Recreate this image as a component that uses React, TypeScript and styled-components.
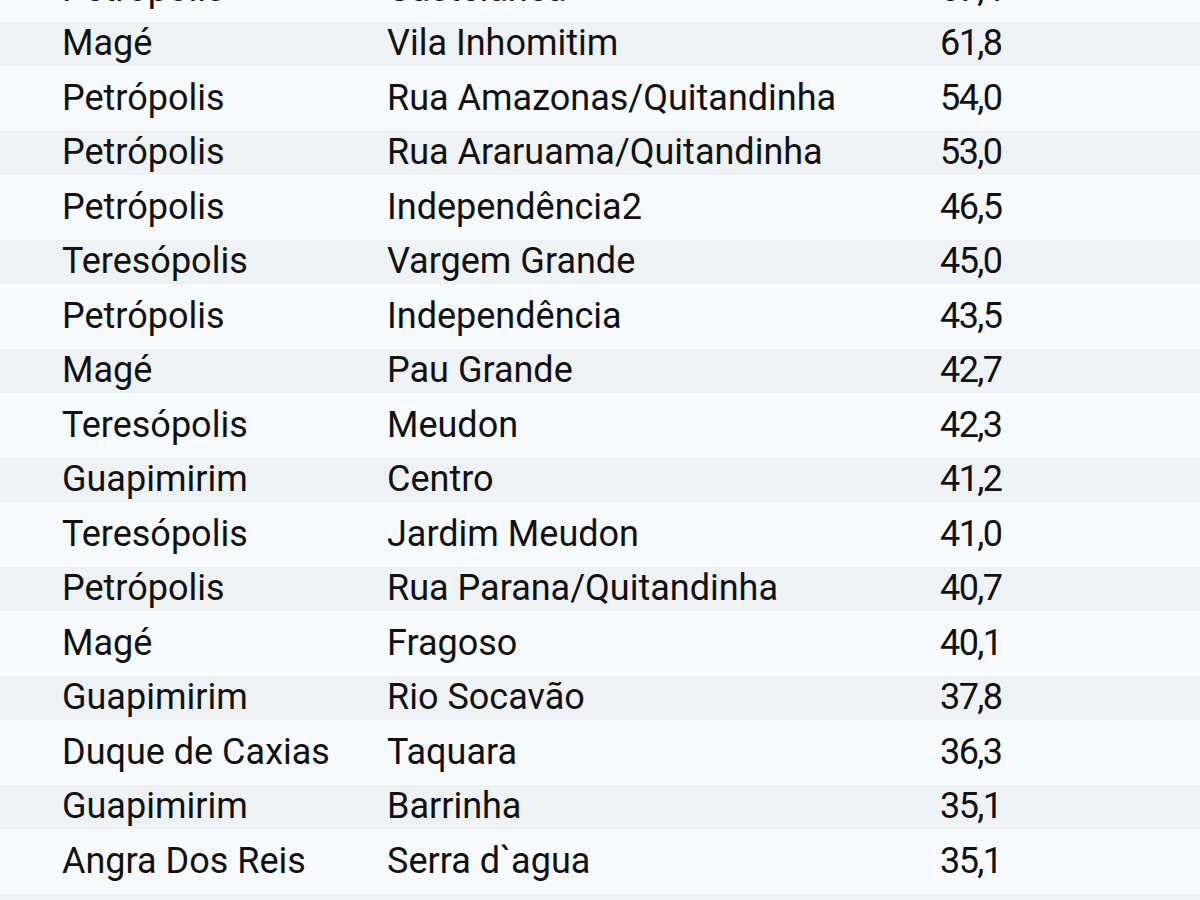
import styled, { createGlobalStyle } from 'styled-components'

const GlobalStyle = createGlobalStyle`
    html, body {
        margin: 0;
        padding: 0;
        background: #f6fafd;
        overflow: hidden;
    }
`

const Page = styled.div`
    width: 1200px;
    height: 900px;
    overflow: hidden;
    background: #f6fafd;
    font-family: Roboto, "Noto Sans", sans-serif;
    color: #111;
`

const Table = styled.div`
    display: flex;
    flex-direction: column;
    margin-top: -38px;
`

const Row = styled.div<{ $shaded: boolean }>`
    display: grid;
    grid-template-columns: 62px 325px 553px 1fr;
    align-items: center;
    height: 54.5px;
    box-sizing: border-box;
    padding: 5.5px 0;
    background-clip: content-box;
    background-color: ${p => (p.$shaded ? '#eef2f5' : 'transparent')};
`

const Cell = styled.div`
    font-size: 36px;
    line-height: 43.5px;
    white-space: nowrap;
    letter-spacing: 0;
`

const Value = styled(Cell)`
    letter-spacing: -1.6px;
`

const rows: [string, string, string][] = [
    ['Petrópolis', 'Castelânea', '67,4'],
    ['Magé', 'Vila Inhomitim', '61,8'],
    ['Petrópolis', 'Rua Amazonas/Quitandinha', '54,0'],
    ['Petrópolis', 'Rua Araruama/Quitandinha', '53,0'],
    ['Petrópolis', 'Independência2', '46,5'],
    ['Teresópolis', 'Vargem Grande', '45,0'],
    ['Petrópolis', 'Independência', '43,5'],
    ['Magé', 'Pau Grande', '42,7'],
    ['Teresópolis', 'Meudon', '42,3'],
    ['Guapimirim', 'Centro', '41,2'],
    ['Teresópolis', 'Jardim Meudon', '41,0'],
    ['Petrópolis', 'Rua Parana/Quitandinha', '40,7'],
    ['Magé', 'Fragoso', '40,1'],
    ['Guapimirim', 'Rio Socavão', '37,8'],
    ['Duque de Caxias', 'Taquara', '36,3'],
    ['Guapimirim', 'Barrinha', '35,1'],
    ['Angra Dos Reis', 'Serra d`agua', '35,1'],
    ['Nova Iguaçu', 'Centro', '34,8'],
]

const App = () => {
    return (
        <Page>
            <GlobalStyle />
            <Table>
                {rows.map((r, i) => (
                    <Row key={i} $shaded={i % 2 === 1}>
                        <span />
                        <Cell>{r[0]}</Cell>
                        <Cell>{r[1]}</Cell>
                        <Value>{r[2]}</Value>
                    </Row>
                ))}
            </Table>
        </Page>
    )
}

export default App
